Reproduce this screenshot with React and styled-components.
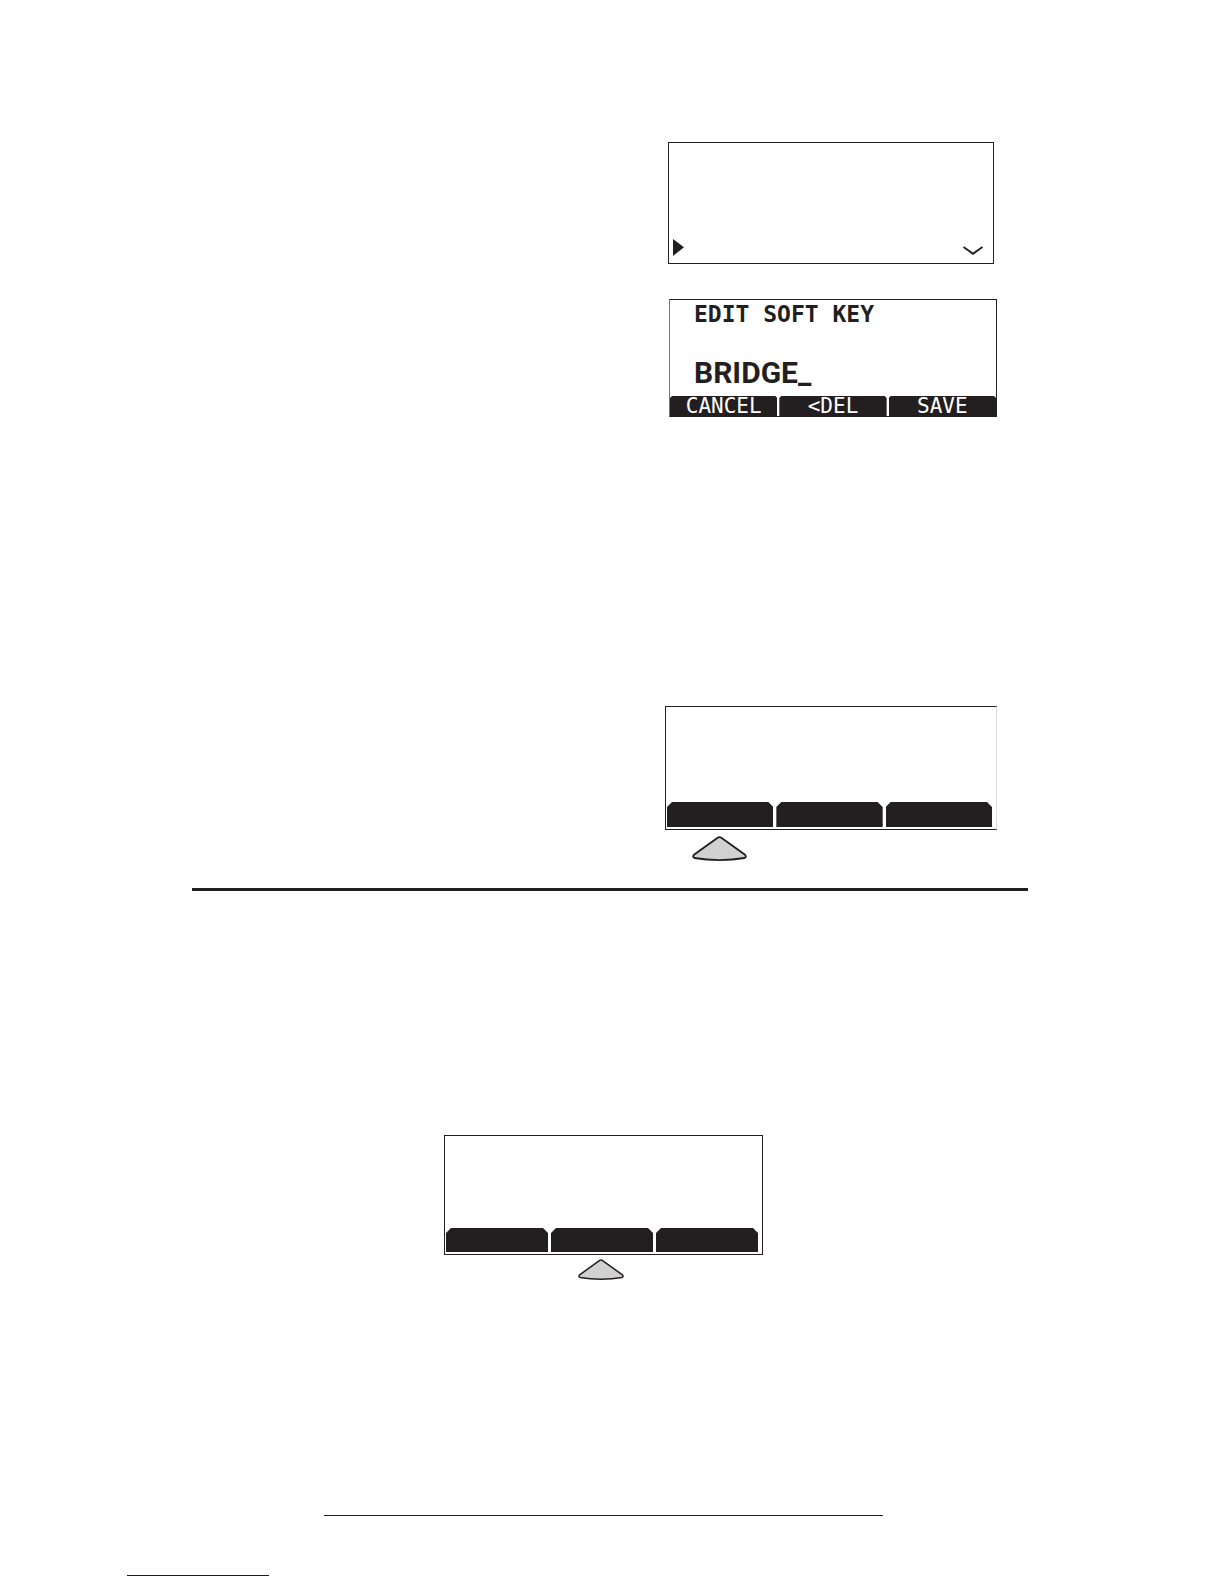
import React from 'react'
import styled, { createGlobalStyle } from 'styled-components'

const GlobalStyle = createGlobalStyle`
    * {
        box-sizing: border-box;
    }

    body {
        margin: 0;
        background: #fff;
        color: #231f20;
        font-family: "DejaVu Sans Mono", monospace;
    }
`
const Page = styled.main`
    display: flex;
    flex-direction: column;
    min-height: 100vh;
    padding: 142px 196px 8px 192px;
`
const Steps = styled.section`
    display: flex;
    flex-direction: column;
    align-items: flex-end;
    padding-right: 31px;
`
const Step = styled.div`
    display: flex;
    flex-direction: column;
    align-items: ${props => props.$align || 'center'};
    width: 332px;
    max-width: 100%;
    margin-bottom: ${props => props.$gap}px;
`
const Display = styled.div`
    display: flex;
    flex-direction: column;
    justify-content: flex-end;
    width: ${props => props.$width}px;
    max-width: 100%;
    min-height: ${props => props.$height}px;
    border: 1px solid #231f20;
    border-left-color: ${props => props.$left || '#231f20'};
    border-right-color: ${props => props.$right || '#231f20'};
`
const MenuRow = styled.div`
    display: flex;
    align-items: flex-end;
    justify-content: space-between;
    padding: 0 10px 7px 4px;
`
const EditForm = styled.form`
    display: flex;
    flex: 1;
    flex-direction: column;
`
const EditLabel = styled.label`
    padding: 0 24px;
    font-size: 23px;
    font-weight: bold;
    line-height: 28px;
`
const EditInput = styled.input`
    width: 100%;
    height: 40px;
    margin: 24px 0 auto;
    padding: 0 24px;
    border: 0;
    outline: 0;
    background: transparent;
    color: #231f20;
    font-family: Roboto, sans-serif;
    font-size: 30px;
    font-weight: bold;
`
const EditKeys = styled.div`
    display: grid;
    grid-template-columns: repeat(3, 1fr);
    gap: 2px;
`
const EditKey = styled.button`
    height: 20px;
    padding: 0;
    border: 0;
    background: #231f20;
    color: #fff;
    font-family: "DejaVu Sans Mono", monospace;
    font-size: 21px;
    line-height: 20px;
    clip-path: polygon(2px 0, calc(100% - 2px) 0, 100% 2px, 100% 100%, 0 100%, 0 2px);
`
const SoftKeys = styled.div`
    display: grid;
    grid-template-columns: repeat(3, 1fr);
    gap: 3px;
    padding: 0 4px 2px 1px;
`
const SoftKey = styled.button`
    height: ${props => props.$height}px;
    padding: 0;
    border: 0;
    background: #231f20;
    clip-path: polygon(5px 0, calc(100% - 5px) 0, 100% 5px, 100% 100%, 0 100%, 0 5px);
`
const Pointers = styled.div`
    display: grid;
    grid-template-columns: repeat(3, 1fr);
    justify-items: center;
    width: ${props => props.$width}px;
    max-width: 100%;
    padding: ${props => props.$top}px 5px 0 0;

    svg {
        grid-column: ${props => props.$column};
    }
`
const Rule = styled.hr`
    width: 100%;
    height: 3px;
    margin: 0;
    border: 0;
    background: #231f20;
`
const Example = styled.section`
    display: flex;
    flex-direction: column;
    align-items: center;
    padding: 244px 13px 0 0;
`
const FooterRule = styled.hr`
    width: 559px;
    max-width: 100%;
    height: 1px;
    margin: 235px 0 0;
    border: 0;
    background: #231f20;
`
const Footer = styled.footer`
    margin: auto 0 0 -65px;
`
const FooterLink = styled.a`
    display: block;
    width: 142px;
    height: 20px;
    border-bottom: 1px solid #10108c;
`

const Pointer = ({ width, height }) => (
    <svg width={width} height={height} viewBox="0 0 55 25" preserveAspectRatio="none" aria-hidden="true">
        <path
            d="M26 1.6 Q27.5 .6 29 1.6 L53 18.8 Q55 21 52.5 22 Q41 24.1 27.5 24.1 Q14 24.1 2.5 22 Q0 21 2 18.8 Z"
            fill="#d1d1d1"
            stroke="#231f20"
            strokeWidth="1.8"
        />
    </svg>
)

const keys = ['left', 'middle', 'right']

const BlankKeys = ({ height }) => (
    <SoftKeys>
        {keys.map(key => (
            <SoftKey key={key} type="button" aria-label={`Soft key ${key}`} $height={height} />
        ))}
    </SoftKeys>
)

const App = () => {
    return (
        <>
            <GlobalStyle />
            <Page>
                <Steps>
                    <Step $gap={35}>
                        <Display $width={326} $height={122}>
                            <MenuRow>
                                <svg width="11" height="17" viewBox="0 0 11 17" aria-hidden="true">
                                    <path d="M0 0 L11 8.3 L0 17 Z" fill="#231f20" />
                                </svg>
                                <svg width="20" height="10" viewBox="0 0 20 10" aria-hidden="true">
                                    <path d="M.5 1 L10 7.8 L19.5 1" fill="none" stroke="#231f20" strokeWidth="2" />
                                </svg>
                            </MenuRow>
                        </Display>
                    </Step>

                    <Step $gap={289} $align="flex-end">
                        <Display $width={328} $height={118} $left="#777">
                            <EditForm onSubmit={e => e.preventDefault()}>
                                <EditLabel htmlFor="soft-key">EDIT SOFT KEY</EditLabel>
                                <EditInput id="soft-key" type="text" defaultValue="BRIDGE_" />
                                <EditKeys>
                                    <EditKey type="button">CANCEL</EditKey>
                                    <EditKey type="button">&lt;DEL</EditKey>
                                    <EditKey type="submit">SAVE</EditKey>
                                </EditKeys>
                            </EditForm>
                        </Display>
                    </Step>

                    <Step $gap={27}>
                        <Display $width={332} $height={124} $right="#ddd">
                            <BlankKeys height={25} />
                        </Display>
                        <Pointers $width={332} $column={1} $top={6}>
                            <Pointer width={55} height={25} />
                        </Pointers>
                    </Step>
                </Steps>

                <Rule />

                <Example>
                    <Display $width={319} $height={120}>
                        <BlankKeys height={24} />
                    </Display>
                    <Pointers $width={319} $column={2} $top={4}>
                        <Pointer width={46} height={21} />
                    </Pointers>
                    <FooterRule />
                </Example>

                <Footer>
                    <FooterLink href="#contents" aria-label="Contents" />
                </Footer>
            </Page>
        </>
    )
}

export default App
